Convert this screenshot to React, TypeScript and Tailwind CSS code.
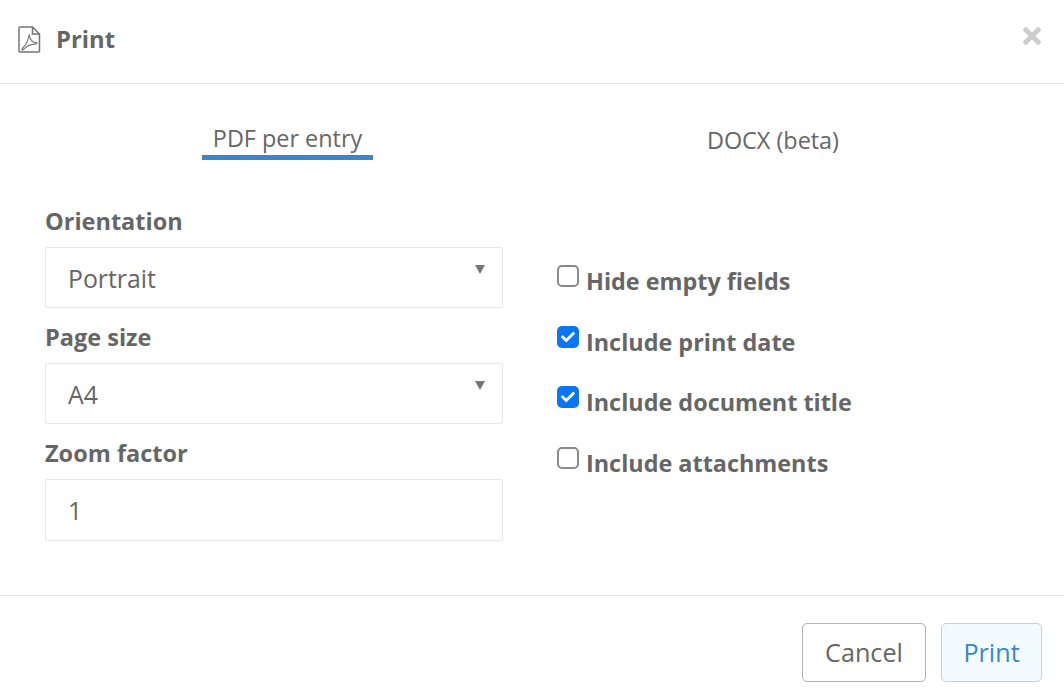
import React from "react";
import { FaTimes, FaCheck } from "react-icons/fa";

function PdfIcon() {
  return (
    <svg width="23" height="27" viewBox="0 0 23 27" fill="none" stroke="#757575" strokeWidth="1.5" className="shrink-0">
      <path d="M14.5 1H2a1 1 0 0 0-1 1v23a1 1 0 0 0 1 1h18.5a1 1 0 0 0 1-1V8z" />
      <path d="M14.5 1.2V8h6.8" />
      <path strokeWidth="1.1" d="M11 9.5c-.6 3.5-2.6 8.8-6.6 13 -1.3 1.3-.2 2.2 1 1 2.4-2.6 5.6-5.3 12.6-5.6 1.3-.1 1.3-1.2 0-1.3-3.6-.3-6-3-6.6-7.3-.1-.7-.3-.7-.4.2z" />
    </svg>
  );
}

function Field({ label, value, select, height }: { label: string; value: string; select?: boolean; height: string }) {
  return (
    <div className="flex flex-col">
      <div className="h-[55px] flex items-center pt-[3px] text-[23.5px] leading-[30px] font-bold text-[#666]">{label}</div>
      <div className={`relative flex items-center ${height} border border-[#e8e8e8] rounded-[2px] bg-white pl-[22px] pt-[2px] text-[24.8px] text-[#666]`}>
        {value}
        {select && <div className="absolute right-[17px] top-[17px] w-0 h-0 border-l-[5.5px] border-r-[5.5px] border-t-[9px] border-l-transparent border-r-transparent border-t-[#777]" />}
      </div>
    </div>
  );
}

function Check({ label, checked }: { label: string; checked?: boolean }) {
  return (
    <div className="flex h-[60.6px] items-start">
      <div className={`w-[22px] h-[22px] rounded-[5px] flex items-center justify-center shrink-0 ${checked ? "bg-[#0a75f5]" : "bg-white border-2 border-[#8a8a8a]"}`}>
        {checked && <FaCheck className="text-white w-[14px] h-[14px]" />}
      </div>
      <div className="ml-[7px] text-[23.4px] leading-[32px] font-bold text-[#666]">{label}</div>
    </div>
  );
}

export default function App() {
  return (
    <div className="w-[1064px] h-[700px] bg-white overflow-hidden flex flex-col" style={{ fontFamily: '"Open Sans", sans-serif' }}>
      <div className="h-[84px] shrink-0 border-b border-[#e5e5e5] flex items-center justify-between pl-[18px] pr-[22px] pb-[5px]">
        <div className="flex items-center text-[#666]">
          <PdfIcon />
          <span className="ml-[15px] text-[23.8px] font-bold leading-[36px]">Print</span>
        </div>
        <FaTimes className="w-[20px] h-[26px] text-[#ccc] mb-[6px]" />
      </div>

      <div className="flex h-[108px] shrink-0">
        <div className="w-[575px] pl-[202px] pt-[37px]">
          <div className="w-[171px] h-[39px] border-b-[5px] border-[#3b85cc] text-center text-[23.4px] leading-[34px] text-[#666]">PDF per entry</div>
        </div>
        <div className="w-[396px] pt-[38px] text-center text-[23.4px] leading-[36px] text-[#666]">DOCX (beta)</div>
      </div>

      <div className="flex flex-1 pl-[45px]">
        <div className="w-[458px]">
          <Field label="Orientation" value="Portrait" select height="h-[61px]" />
          <Field label="Page size" value="A4" select height="h-[61px]" />
          <Field label="Zoom factor" value="1" height="h-[62px]" />
        </div>
        <div className="ml-[54px] pt-[73px]">
          <Check label="Hide empty fields" />
          <Check label="Include print date" checked />
          <Check label="Include document title" checked />
          <Check label="Include attachments" />
        </div>
      </div>

      <div className="h-[105px] shrink-0 border-t border-[#e5e5e5] flex items-start justify-end gap-[15px] pt-[27px] pr-[22px]">
        <button className="w-[124px] h-[59px] rounded-[5px] border border-[#b3b3b3] bg-white text-[25.2px] text-[#666]">Cancel</button>
        <button className="w-[101px] h-[59px] rounded-[5px] border border-[#a6dcf5] bg-[#f2fbff] text-[25.2px] text-[#3b85cc]">Print</button>
      </div>
    </div>
  );
}
